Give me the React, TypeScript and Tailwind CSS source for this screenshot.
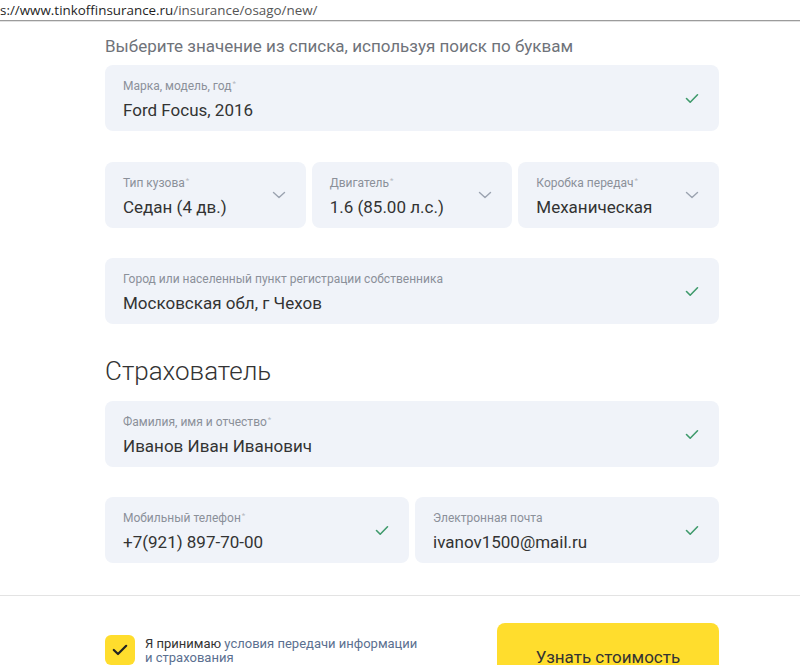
import { ReactNode } from 'react';

const font = { fontFamily: 'Roboto, "Liberation Sans", sans-serif' };

function Check() {
  return (
    <svg width="14" height="11" viewBox="0 0 14 11" fill="none">
      <path d="M1.5 5.5 L5.2 9.2 L12.5 1.8" stroke="#3f9a6c" strokeWidth="1.6" strokeLinecap="round" strokeLinejoin="round" />
    </svg>
  );
}

function Chevron() {
  return (
    <svg width="14" height="8" viewBox="0 0 14 8" fill="none">
      <path d="M1.5 1.5 L7 6.5 L12.5 1.5" stroke="#9ba3b0" strokeWidth="1.4" strokeLinecap="round" strokeLinejoin="round" />
    </svg>
  );
}

interface FieldProps {
  label: string;
  value: string;
  required?: boolean;
  icon?: ReactNode;
  className?: string;
}

function Field({ label, value, required = true, icon = <Check />, className = '' }: FieldProps) {
  return (
    <div className={`flex h-[66px] items-center justify-between rounded-lg bg-[#f0f3f9] pl-[18px] pr-[20px] ${className}`}>
      <div className="flex flex-col pt-[3px]">
        <div className="text-[12px] leading-[15px] text-[#8b9099]">
          {label}
          {required && <sup className="ml-[1px] text-[8px] text-[#b5b9c0]">*</sup>}
        </div>
        <div className="mt-[6px] text-[17px] leading-[20px] text-[#333333]">{value}</div>
      </div>
      <div className="flex shrink-0 items-center">{icon}</div>
    </div>
  );
}

export default function App() {
  return (
    <div className="relative h-[665px] w-[800px] overflow-hidden bg-white" style={font}>
      {/* address bar */}
      <div
        className="h-[21px] border-b border-[#9c9c9c] text-[13.4px] leading-[20px] text-[#555]"
        style={{ fontFamily: '"Open Sans", "DejaVu Sans", sans-serif' }}
      >
        <span className="text-[#1f1f1f]">s://www.tinkoffinsurance.ru</span>/insurance/osago/new/
      </div>
      <div className="h-[1px] bg-[#e2e2e2]" />

      <div className="ml-[105px] w-[614px]">
        <p className="mt-[14px] text-[17px] leading-[20px] text-[#6f737a]">
          Выберите значение из списка, используя поиск по буквам
        </p>

        <Field className="mt-[9px]" label="Марка, модель, год" value="Ford Focus, 2016" />

        <div className="mt-[31px] grid grid-cols-3 gap-[6px]">
          <Field label="Тип кузова" value="Седан (4 дв.)" icon={<Chevron />} />
          <Field label="Двигатель" value="1.6 (85.00 л.с.)" icon={<Chevron />} />
          <Field label="Коробка передач" value="Механическая" icon={<Chevron />} />
        </div>

        <Field
          className="mt-[30px]"
          label="Город или населенный пункт регистрации собственника"
          required={false}
          value="Московская обл, г Чехов"
        />

        <h2 className="mt-[30px] text-[26px] font-light leading-[34px] text-[#333333]">Страхователь</h2>

        <Field className="mt-[13px]" label="Фамилия, имя и отчество" value="Иванов Иван Иванович" />

        <div className="mt-[30px] grid grid-cols-2 gap-[6px]">
          <Field label="Мобильный телефон" value="+7(921) 897-70-00" />
          <Field label="Электронная почта" required={false} value="ivanov1500@mail.ru" />
        </div>
      </div>

      <div className="mt-[32px] h-[1px] bg-[#e3e3e3]" />

      <div className="ml-[105px] flex w-[614px] items-start justify-between">
        <div className="mt-[39px] flex items-start gap-[10px]">
          <div className="flex h-[30px] w-[30px] items-center justify-center rounded-[6px] bg-[#ffdd2d]">
            <svg width="16" height="12" viewBox="0 0 16 12" fill="none">
              <path d="M1.8 6 L6 10 L14.2 1.8" stroke="#222" strokeWidth="2.2" strokeLinecap="round" strokeLinejoin="round" />
            </svg>
          </div>
          <div className="mt-[2px] text-[13px] leading-[14px] text-[#333]">
            Я принимаю <span className="text-[#5b7090]">условия передачи информации</span>
            <br />
            <span className="text-[#5b7090]">и страхования</span>
          </div>
        </div>
        <button className="mt-[27px] flex h-[60px] w-[222px] items-start justify-center rounded-lg bg-[#ffdd2d] pt-[22px] text-[17px] text-[#333]">
          Узнать стоимость
        </button>
      </div>
    </div>
  );
}
